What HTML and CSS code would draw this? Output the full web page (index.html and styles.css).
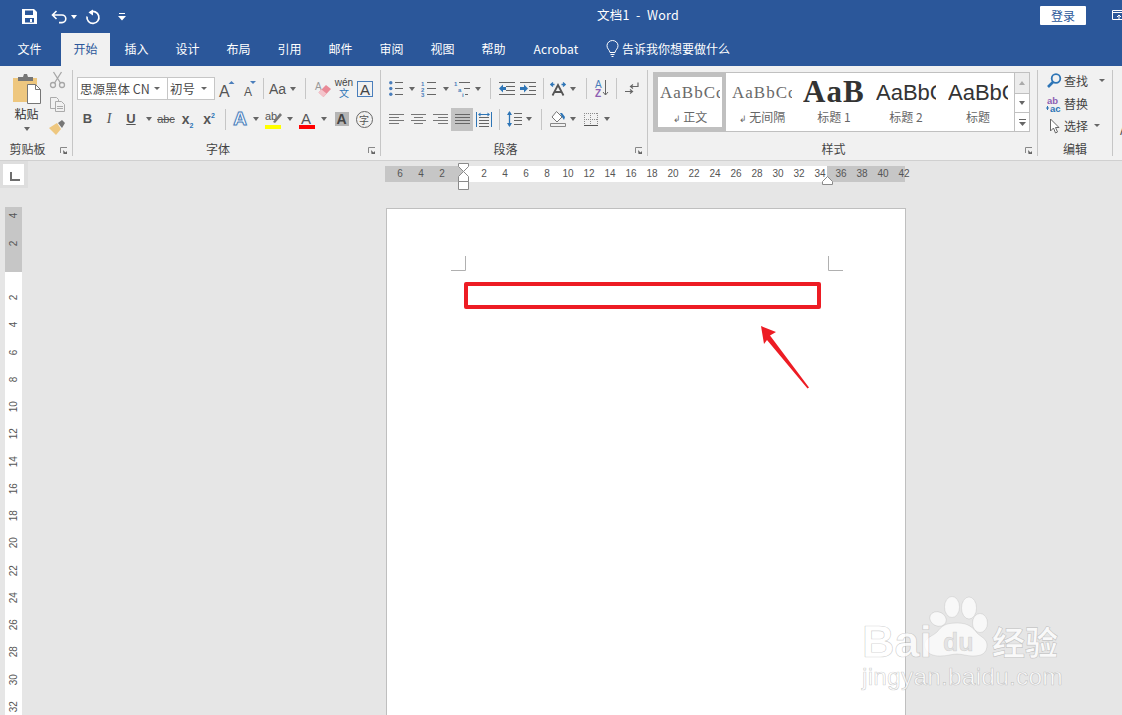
FILE: index.html
```html
<!DOCTYPE html>
<html lang="zh">
<head>
<meta charset="utf-8">
<title>文档1 - Word</title>
<link rel="stylesheet" href="styles.css">
</head>
<body>
<div class="app">
  <header class="titlebar">
    <div class="qat">
      <svg class="ic-save" width="15" height="15" viewBox="0 0 15 15"><path fill="#fff" d="M0 0h12l3 3v12H0z"/><path fill="#2b579a" d="M3 1.500h8V6H3zM3 9h9v4.500H3z"/><path fill="#fff" d="M8 10h2v3H8z"/></svg>
      <svg class="ic-undo" width="16" height="14" viewBox="0 0 16 14"><path fill="none" stroke="#fff" stroke-width="1.600" d="M5.500 1 1.500 5l4 4M2 5h9a3.800 3.800 0 0 1 0 7.600H8"/></svg>
      <span class="caret caret-w qat-caret"></span>
      <svg class="ic-redo" width="15" height="15" viewBox="0 0 15 15"><path fill="none" stroke="#fff" stroke-width="1.700" d="M5 3.200a6 6 0 1 1-3 4.300"/><path fill="#fff" d="M8 .5v6L3.500 3.500z"/></svg>
      <svg class="ic-cust" width="8" height="8" viewBox="0 0 8 8"><path fill="#fff" d="M1 0h6v1H1zM0 3h8L4 7.500z"/></svg>
    </div>
    <div class="doc-title">文档1&nbsp; -&nbsp; Word</div>
    <button class="signin">登录</button>
    <svg class="ic-display" width="12" height="10" viewBox="0 0 12 10"><path fill="none" stroke="#fff" d="M.5.500h14v9H.5zM.5 2.500h14M5 7l2-2 2 2M7 5v4"/></svg>
  </header>

  <nav class="tabs">
    <span class="tab">文件</span>
    <span class="tab tab-active">开始</span>
    <span class="tab">插入</span>
    <span class="tab">设计</span>
    <span class="tab">布局</span>
    <span class="tab">引用</span>
    <span class="tab">邮件</span>
    <span class="tab">审阅</span>
    <span class="tab">视图</span>
    <span class="tab">帮助</span>
    <span class="tab tab-latin">Acrobat</span>
    <span class="tellme">
      <svg width="13" height="17" viewBox="0 0 13 17"><path fill="none" stroke="#fff" d="M4 12.500C3.500 9.500 1 9 1 5.700a5.500 5.200 0 0 1 11 0C12 9 9.500 9.500 9 12.500zM4.500 14.500h4M5.500 16.500h2"/></svg>
      告诉我你想要做什么
    </span>
  </nav>

  <section class="ribbon">
    <div class="group g-clip">
      <div class="clip-body">
        <div class="paste">
          <svg width="30" height="30" viewBox="0 0 30 30"><path fill="#eec77f" d="M1 4h24v24H1z"/><path fill="#767676" d="M6 3h5l1-3h3l1 3h5v4H6z"/><path fill="#fff" stroke="#767676" d="M15.500 10.500h8l5 5v14h-13z"/><path fill="none" stroke="#767676" d="M23.500 10.500v5h5"/></svg>
          <span class="paste-label">粘贴</span>
          <span class="caret"></span>
        </div>
        <div class="clip-tools">
          <svg width="15" height="17" viewBox="0 0 15 17"><g fill="none" stroke="#a6a6a6" stroke-width="1.300"><circle cx="3" cy="13" r="2.500"/><circle cx="12" cy="13" r="2.500"/><path d="M4.500 11 11.500 0M10.500 11 3.500 0"/></g></svg>
          <svg width="15" height="15" viewBox="0 0 15 15"><g fill="#f1f1f1" stroke="#ababab"><path d="M.5.500h6l2 2v9h-8z"/><path d="M5.500 4.500h6l3 3v7h-9z"/></g><path stroke="#ababab" d="M7 9.500h6M7 11.500h6"/></svg>
          <svg width="16" height="15" viewBox="0 0 16 15"><path fill="#eec77f" d="M0 8 8 3l4 6-5 6z"/><path fill="#767676" d="M9 3l4-3 3 3-3 5z"/></svg>
        </div>
      </div>
      <div class="group-label label-clip">剪贴板</div>
      <svg class="launcher" width="8" height="8" viewBox="0 0 8 8"><path fill="none" stroke="#888" d="M.500 6V.500H7"/><path fill="#666" d="M3 3l4 4H3.500zM7 4v3H4z"/></svg>
    </div>

    <div class="group g-font">
      <div class="icon-row font-r1">
        <div class="combo combo-name"><span>思源黑体 CN</span><i class="caret"></i></div>
        <div class="combo combo-size"><span>初号</span><i class="caret"></i></div>
        <svg width="16" height="18" viewBox="0 0 16 18"><text class="gl" x="0" y="17" font-size="16">A</text><path fill="#4a7ebb" d="M9.500 4l3-3 3 3z"/></svg>
        <svg width="15" height="16" viewBox="0 0 15 16"><text class="gl" x="3" y="15" font-size="12">A</text><path fill="#4a7ebb" d="M9 0h6l-3 3z"/></svg>
        <span class="sep"></span>
        <svg width="20" height="16" viewBox="0 0 20 16"><text class="gl" x="1" y="13" font-size="14">Aa</text></svg>
        <span class="caret"></span>
        <span class="sep"></span>
        <svg width="16" height="18" viewBox="0 0 16 18"><text class="gl gl-light" x="0" y="10" font-size="10">A</text><path fill="#e98a97" d="M3.500 12.500 11 5l5 4-7.500 8z"/><path fill="#f4c4cb" d="M3.500 12.500 6.500 9.500l5 4-3 3.500z"/></svg>
        <div class="wen"><span class="wen-top">wén</span><span class="wen-bot">文</span></div>
        <div class="abox">A</div>
      </div>
      <div class="icon-row font-r2">
        <span class="fmt fmt-b">B</span>
        <span class="fmt fmt-i">I</span>
        <span class="fmt fmt-u">U</span>
        <span class="caret"></span>
        <span class="fmt-abc">abc</span>
        <span class="fmt fmt-sc">x<sub>2</sub></span>
        <span class="fmt fmt-sc">x<sup>2</sup></span>
        <span class="sep sep-tall"></span>
        <span class="a-glow">A</span>
        <span class="caret"></span>
        <svg width="17" height="19" viewBox="0 0 17 19"><text class="gl" x="0" y="10" font-size="11">ab</text><path fill="#777" d="M8 12l7-9 2 2-7 8z"/><path fill="#ff0" d="M0 15h16v4H0z"/></svg>
        <span class="caret"></span>
        <svg width="16" height="19" viewBox="0 0 16 19"><text class="gl" x="2" y="14" font-size="15">A</text><path fill="#f00" d="M0 15h16v4H0z"/></svg>
        <span class="caret"></span>
        <span class="a-shade">A</span>
        <span class="a-circle">字</span>
      </div>
      <div class="group-label label-font">字体</div>
      <svg class="launcher" width="8" height="8" viewBox="0 0 8 8"><path fill="none" stroke="#888" d="M.500 6V.500H7"/><path fill="#666" d="M3 3l4 4H3.500zM7 4v3H4z"/></svg>
    </div>

    <div class="group g-para">
      <div class="icon-row para-r1">
        <svg width="14" height="15" viewBox="0 0 14 15"><g fill="#4a7ebb"><circle cx="1.800" cy="1.800" r="1.700"/><circle cx="1.800" cy="7.500" r="1.700"/><circle cx="1.800" cy="13.200" r="1.700"/></g><path stroke="#666" d="M6 1.500h8M6 7.500h8M6 13.500h8"/></svg>
        <span class="caret"></span>
        <svg width="15" height="16" viewBox="0 0 15 16"><g fill="#4a7ebb" font-size="6" font-family="Liberation Sans" font-weight="700"><text x="0" y="5">1</text><text x="0" y="10.500">2</text><text x="0" y="16">3</text></g><path stroke="#666" d="M6 1.500h9M6 7.500h9M6 13.500h9"/></svg>
        <span class="caret"></span>
        <svg width="17" height="16" viewBox="0 0 17 16"><g fill="#4a7ebb" font-size="6" font-family="Liberation Sans" font-weight="700"><text x="0" y="5">1</text><text x="4" y="11">a</text><text x="8" y="16">i</text></g><path stroke="#666" d="M5 1.500h11M10 7.500h6M11 13.500h3"/></svg>
        <span class="caret"></span>
        <span class="sep"></span>
        <svg width="16" height="13" viewBox="0 0 16 13"><path stroke="#666" d="M0 .500h16M7 4.500h9M7 8.500h9M0 12.500h16"/><path fill="#2e75b6" d="M0 6.500l4-4v2.500h3v3H4v2.500z"/></svg>
        <svg width="16" height="13" viewBox="0 0 16 13"><path stroke="#666" d="M0 .500h16M9 4.500h7M9 8.500h7M0 12.500h16"/><path fill="#2e75b6" d="M8 6.500l-4-4v2.500H0v3h4v2.500z"/></svg>
        <span class="sep"></span>
        <svg width="16" height="14" viewBox="0 0 16 14"><path fill="none" stroke="#555" stroke-width="1.800" d="M2.500 13.500 8 3l5.500 10.500M4.500 10h7"/><path fill="none" stroke="#2e75b6" stroke-width="1.300" d="M3 .5 .8 2.500 3 4.500M13 .5l2.200 2-2.200 2M1 2.500h3.500M11.500 2.500H15"/></svg>
        <span class="caret"></span>
        <span class="sep"></span>
        <svg width="14" height="17" viewBox="0 0 14 17"><text x="0" y="8" font-size="10" font-family="Liberation Sans" fill="#4a7ebb">A</text><text x="0" y="16.500" font-size="10" font-family="Liberation Sans" fill="#8e5fb3" font-weight="700">Z</text><path fill="none" stroke="#666" d="M10.500 0v15M8 12l2.500 3 2.500-3"/></svg>
        <span class="sep"></span>
        <svg width="14" height="13" viewBox="0 0 14 13"><path fill="none" stroke="#666" stroke-width="1.200" d="M13 .500v4H6M8 2.500 5.500 4.500 8 6.500M0 9.500h7M5 7.500l2.500 2-2.500 2"/></svg>
      </div>
      <div class="icon-row para-r2">
        <svg width="15" height="11" viewBox="0 0 15 11"><path stroke="#777" d="M0 .500h15M0 3.500h10M0 6.500h15M0 9.500h10"/></svg>
        <svg width="15" height="11" viewBox="0 0 15 11"><path stroke="#777" d="M0 .500h15M3 3.500h9M0 6.500h15M3 9.500h9"/></svg>
        <svg width="15" height="11" viewBox="0 0 15 11"><path stroke="#777" d="M0 .500h15M5 3.500h10M0 6.500h15M5 9.500h10"/></svg>
        <span class="active-cell"><svg width="15" height="11" viewBox="0 0 15 11"><path stroke="#666" d="M0 .500h15M0 3.500h15M0 6.500h15M0 9.500h15"/></svg></span>
        <svg width="16" height="15" viewBox="0 0 16 15"><path stroke="#666" d="M3 5.500h10M3 8.500h10M3 11.500h10M3 14.500h10"/><path fill="none" stroke="#2e75b6" d="M.500 0v15M15.500 0v15M3 2.500h10"/><path fill="#2e75b6" d="M2 2.500l2.500-2v4zM14 2.500l-2.500-2v4z"/></svg>
        <span class="sep sep-tall"></span>
        <svg width="15" height="16" viewBox="0 0 15 16"><path stroke="#666" d="M7 2.500h8M7 6.500h8M7 9.500h8M7 13.500h8"/><path fill="none" stroke="#2e75b6" stroke-width="1.300" d="M2.500 1v14"/><path fill="#2e75b6" d="M0 4l2.500-4L5 4zM0 12l2.500 4L5 12z"/></svg>
        <span class="caret"></span>
        <span class="sep sep-tall"></span>
        <svg width="16" height="16" viewBox="0 0 16 16"><path fill="#fff" stroke="#777" d="M6.500.500 12 6l-5 5-5-5z"/><path fill="#2e75b6" d="M10 2h2l3 4-1 3-2-3z"/><path fill="#f1f1f1" stroke="#888" d="M.500 12.500h15v3H.500z"/></svg>
        <span class="caret"></span>
        <svg width="14" height="13" viewBox="0 0 14 13"><g fill="none" stroke="#8c8c8c" stroke-dasharray="1 1"><path d="M0 .500h14M0 6.500h14M.500 0v12M6.500 0v12M13.500 0v12"/></g><path stroke="#555" d="M0 12.500h14"/></svg>
        <span class="caret"></span>
      </div>
      <div class="group-label label-para">段落</div>
      <svg class="launcher" width="8" height="8" viewBox="0 0 8 8"><path fill="none" stroke="#888" d="M.500 6V.500H7"/><path fill="#666" d="M3 3l4 4H3.500zM7 4v3H4z"/></svg>
    </div>

    <div class="group g-styles">
      <div class="gallery">
        <div class="style-item style-sel"><span class="pv pv-serif">AaBbCc</span><span class="st"><i class="para-mark">↲</i> 正文</span></div>
        <div class="style-item"><span class="pv pv-serif">AaBbCc</span><span class="st"><i class="para-mark">↲</i> 无间隔</span></div>
        <div class="style-item"><span class="pv pv-h1">AaB</span><span class="st">标题 1</span></div>
        <div class="style-item"><span class="pv pv-h2">AaBbC</span><span class="st">标题 2</span></div>
        <div class="style-item"><span class="pv pv-h2">AaBbC</span><span class="st">标题</span></div>
        <div class="gallery-scroll">
          <span class="gs gs-up"><i class="caret caret-up"></i></span>
          <span class="gs"><i class="caret"></i></span>
          <span class="gs gs-more"><svg width="7" height="8" viewBox="0 0 7 8"><path fill="#666" d="M0 0h7v1H0zM0 3h7L3.500 7z"/></svg></span>
        </div>
      </div>
      <div class="group-label label-styles">样式</div>
      <svg class="launcher" width="8" height="8" viewBox="0 0 8 8"><path fill="none" stroke="#888" d="M.500 6V.500H7"/><path fill="#666" d="M3 3l4 4H3.500zM7 4v3H4z"/></svg>
    </div>

    <div class="group g-edit">
      <div class="edit-list">
        <div class="edit-row">
          <svg width="16" height="16" viewBox="0 0 16 16"><circle cx="10" cy="5.500" r="4.300" fill="none" stroke="#2e75b6" stroke-width="1.800"/><path stroke="#2e75b6" stroke-width="2.600" d="M7 9l-5 5"/></svg>
          <span>查找</span><i class="caret edit-caret-a"></i>
        </div>
        <div class="edit-row">
          <svg width="16" height="16" viewBox="0 0 16 16"><text x="1" y="7.500" font-size="9.500" font-family="Liberation Sans" fill="#8e5fb3" font-weight="700">ab</text><text x="4" y="15.500" font-size="9.500" font-family="Liberation Sans" fill="#2e75b6" font-weight="700">ac</text><path stroke="#2e75b6" d="M0 12h3M1.500 10v4"/></svg>
          <span>替换</span>
        </div>
        <div class="edit-row">
          <svg width="16" height="16" viewBox="0 0 16 16"><path fill="#fff" stroke="#666" d="M4.500 1v12l3-3 2 5 2-1-2-4.500h3.500z"/></svg>
          <span>选择</span><i class="caret edit-caret-b"></i>
        </div>
      </div>
      <div class="group-label">编辑</div>
    </div>
    <div class="group-cut">A</div>
  </section>

  <main class="workspace">
    <div class="corner-wrap"><div class="corner"><span class="corner-l"></span></div></div>
    <div class="hruler">
      <span>6</span><span>4</span><span>2</span><span></span><span>2</span><span>4</span><span>6</span><span>8</span><span>10</span><span>12</span><span>14</span><span>16</span><span>18</span><span>20</span><span>22</span><span>24</span><span>26</span><span>28</span><span>30</span><span>32</span><span>34</span><span>36</span><span>38</span><span>40</span><span>42</span>
      <svg class="marker-left" width="12" height="28" viewBox="0 0 12 28"><path fill="#fff" stroke="#8a8a8a" d="M.500.500h10v3l-5 5-5-5zM5.500 8.500l5 5v5H.500v-5zM.500 18.500h10v8H.500z"/></svg>
      <svg class="marker-right" width="12" height="10" viewBox="0 0 12 10"><path fill="#fff" stroke="#8a8a8a" d="M5.500.500l5 5v3H.500v-3z"/></svg>
    </div>
    <div class="vruler">
      <div class="vscale">
        <span>4</span><span>2</span><span></span><span>2</span><span>4</span><span>6</span><span>8</span><span>10</span><span>12</span><span>14</span><span>16</span><span>18</span><span>20</span><span>22</span><span>24</span><span>26</span><span>28</span><span>30</span><span>32</span>
      </div>
    </div>
    <div class="page">
      <svg class="crop crop-l" width="15" height="15" viewBox="0 0 15 15"><path fill="none" stroke="#b0b0b0" d="M14.500 0v14.500H0"/></svg>
      <svg class="crop crop-r" width="15" height="15" viewBox="0 0 15 15"><path fill="none" stroke="#b0b0b0" d="M.500 0v14.500H15"/></svg>
      <div class="callout"></div>
      <svg class="arrow" width="52" height="66" viewBox="0 0 52 66"><path fill="#ed1c24" d="M1 0 16 6 10 9.500 49 61.500 47.500 62.500 7 14 4 18z"/></svg>
    </div>
    <svg class="watermark" width="215" height="100" viewBox="0 0 215 100">
      <g class="wm-shape">
        <ellipse cx="92" cy="13" rx="7.500" ry="10.500"/>
        <ellipse cx="109" cy="14" rx="7.500" ry="11"/>
        <ellipse cx="78" cy="25" rx="8.500" ry="7" transform="rotate(25 78 25)"/>
        <ellipse cx="120" cy="29" rx="7.500" ry="9.500"/>
        <path transform="translate(3 2)" d="M77 60c-13 0-17-8-15-14 2-5 8-6 12-10 5-6 8-9 20-9s16 5 20 10c4 4 10 6 10 12 0 8-5 11-14 11-6 0-11-2-16-2s-10 2-17 2z"/>
      </g>
      <text class="wm-text wm-bai" x="2" y="63">Bai</text>
      <text class="wm-du" x="83" y="57">du</text>
      <text class="wm-text wm-cn" x="132" y="61">经验</text>
      <text class="wm-text wm-url" x="2" y="91">jingyan.baidu.com</text>
    </svg>
  </main>
</div>
</body>
</html>
```
FILE: styles.css
```css
* { box-sizing: border-box; }
html, body { margin: 0; padding: 0; }
body {
  width: 1122px;
  height: 715px;
  overflow: hidden;
  font-family: "Noto Sans CJK SC", "Liberation Sans", sans-serif;
  font-size: 12px;
  color: #444;
  background: #e6e6e6;
}
svg { overflow: visible; }
.app { display: flex; flex-direction: column; height: 715px; overflow: hidden; position: relative; }

/* title bar */
.titlebar {
  height: 33px;
  background: #2b579a;
  color: #fff;
  display: flex;
  align-items: center;
  position: relative;
  flex: none;
}
.qat { display: flex; align-items: center; padding-left: 22px; }
.ic-undo { margin-left: 14px; }
.qat-caret { margin-left: 4px; }
.ic-redo { margin-left: 8px; }
.ic-cust { margin-left: 18px; }
.doc-title { margin-left: 471px; line-height: 30px; white-space: nowrap; width: 443px; margin-top: -4px; font-size: 12.500px; letter-spacing: .3px; }
.signin {
  position: absolute;
  left: 1040px;
  top: 6px;
  width: 46px;
  height: 19px;
  background: #fff;
  border: 0;
  border-radius: 1px;
  color: #2b579a;
  font: 12px/19px "Noto Sans CJK SC", sans-serif;
  padding: 0;
}
.ic-display { position: absolute; left: 1112px; top: 10px; overflow: hidden; }

/* tabs */
.tabs {
  height: 33px;
  background: #2b579a;
  display: flex;
  align-items: stretch;
  padding-left: 5px;
  flex: none;
}
.tab { width: 49px; margin-right: 2px; text-align: center; color: #fff; line-height: 31px; white-space: nowrap; font-size: 12px; }
.tab-active { background: #f1f1f1; color: #2b579a; margin-left: 5px; margin-right: 2px; }
.tab-latin { width: 60px; margin-left: 6px; letter-spacing: .2px; margin-right: 2px; }
.tellme { display: flex; align-items: center; gap: 3px; color: #fff; margin-left: 18px; padding-bottom: 2px; white-space: nowrap; }

/* ribbon */
.ribbon {
  height: 95px;
  flex: none;
  background: #f1f1f1;
  border-bottom: 1px solid #d0d0d0;
  padding: 4px 0 4px;
  display: flex;
  overflow: hidden;
}
.group { position: relative; height: 86px; border-right: 1px solid #c6c6c6; flex: none; }
.g-clip { width: 73px; }
.g-font { width: 308px; padding: 7px 0 0 4px; }
.g-para { width: 267px; padding: 7px 0 0 4px; }
.g-styles { width: 390px; padding: 2px 0 0 5px; }
.g-edit { width: 75px; }
.group-cut { padding: 50px 0 0 7px; font-size: 13px; color: #555; }
.group-label {
  position: absolute;
  left: 0;
  right: 0;
  bottom: 0;
  line-height: 14px;
  height: 14px;
  text-align: center;
  color: #444;
}
.label-clip { padding-right: 17px; }
.label-font, .label-para { padding-right: 17px; }
.label-styles { padding-right: 18px; }
.launcher { position: absolute; right: 4px; bottom: 1px; }

.caret {
  display: inline-block;
  width: 0;
  height: 0;
  border-left: 3.500px solid transparent;
  border-right: 3.500px solid transparent;
  border-top: 4px solid #666;
}
.caret-w { border-top-color: #fff; }
.caret-up { border-top: 0; border-bottom: 4px solid #aaa; }

/* clipboard */
.clip-body { display: flex; padding: 4px 0 0 12px; }
.paste { width: 30px; display: flex; flex-direction: column; align-items: center; }
.paste-label { line-height: 16px; margin-top: 2px; margin-left: -1px; color: #333; white-space: nowrap; }
.paste .caret { margin-top: 5px; }
.clip-tools { margin-left: 7px; margin-top: -3px; display: flex; flex-direction: column; align-items: center; gap: 8px; padding-top: 1px; }

/* icon rows */
.icon-row { display: grid; align-items: center; justify-items: center; }
.font-r1 { height: 23px; grid-template-columns: 91px 47px 23px 20px 10px 20px 10px 14px 21px 22px 20px; }
.font-r2 { height: 24px; margin-top: 7px; grid-template-columns: 21px 22px 22px 13px 22px 21px 22px 10px 20px 12px 22px 12px 22px 12px 23px 22px; }
.para-r1 { height: 23px; grid-template-columns: 22px 10px 22px 14px 19px 12px 12px 21px 21px 10px 20px 10px 16px 16px 12px 20px; }
.para-r2 { height: 24px; margin-top: 7px; grid-template-columns: 22px 22px 22px 22px 22px 8px 22px 8px 16px 18px 12px 24px 8px; }
.sep { width: 1px; height: 21px; background: #c6c6c6; }
.sep-tall { height: 21px; }

.combo {
  height: 23px;
  background: #fff;
  border: 1px solid #c6c6c6;
  display: flex;
  align-items: center;
  justify-content: space-between;
  padding: 0 7px 0 2px;
  font-size: 12.500px;
  white-space: nowrap;
  justify-self: stretch;
  color: #4a4a4a;
}
.combo-size { border-left: 0; padding-left: 2px; }
.combo .caret { border-left-width: 3px; border-right-width: 3px; border-top-width: 3px; }

.gl { font-family: "Liberation Sans", sans-serif; fill: #555; }
.gl-light { fill: #999; }
.wen { display: flex; flex-direction: column; align-items: center; line-height: 10px; margin-top: -2px; }
.wen-top { font-size: 10px; color: #444; font-family: "Liberation Sans", sans-serif; }
.wen-bot { font-size: 10px; color: #2e75b6; }
.abox {
  width: 16px;
  height: 16px;
  border: 1px solid #4a7ebb;
  color: #444;
  font: 15px/15px "Liberation Sans", sans-serif;
  text-align: center;
}
.fmt { font: 13px/16px "Liberation Sans", sans-serif; color: #555; }
.fmt-b { font-weight: 700; }
.fmt-i { font-style: italic; font-family: "Liberation Serif", serif; font-size: 14px; }
.fmt-u { font-weight: 700; text-decoration: underline; }
.fmt-sc { font-weight: 700; font-size: 14px; }
.fmt-sc sub, .fmt-sc sup { font-size: 7px; color: #2e75b6; font-weight: 700; line-height: 0; }
.fmt-abc { font: 11px/14px "Liberation Sans", sans-serif; color: #555; text-decoration: line-through; }
.a-glow { font: 700 19px/20px "Liberation Sans", sans-serif; color: #fff; -webkit-text-stroke: 1px #4a7ebb; text-shadow: 0 0 2px #9dc3e6; }
.a-shade { width: 14px; height: 14px; background: #b5b5b5; color: #444; font: 700 14px/14px "Liberation Sans", sans-serif; text-align: center; }
.a-circle { width: 17px; height: 17px; border: 1px solid #666; border-radius: 50%; font-size: 10px; line-height: 15px; text-align: center; color: #555; }
.active-cell { width: 22px; height: 23px; background: #c3c3c3; display: flex; align-items: center; justify-content: center; }

/* styles gallery */
.gallery {
  width: 377px;
  height: 60px;
  background: #fff;
  border: 1px solid #c0c0c0;
  display: flex;
  overflow: hidden;
}
.style-item { width: 72px; height: 58px; flex: none; display: flex; flex-direction: column; align-items: center; overflow: hidden; color: #555; }
.style-sel { width: 72px; border: 4px solid #c0c0c0; border-bottom-width: 4px; }
.style-sel .pv { margin-top: -4px; }
.style-sel .st { margin-top: 0; }
.pv { height: 36px; line-height: 36px; width: 62px; overflow: hidden; white-space: nowrap; text-align: left; flex: none; }
.pv-serif { font: 17px/40px "Liberation Serif", serif; color: #6a6a6a; letter-spacing: 1px; width: 60px; }
.pv-h1 { font: 700 31px/38px "Liberation Serif", serif; color: #333; letter-spacing: 1px; }
.pv-h2 { font: 22px/40px "Liberation Sans", sans-serif; color: #333; width: 60px; }
.st { font-size: 12px; line-height: 16px; color: #666; white-space: nowrap; margin-top: 0; }
.para-mark { font-style: normal; font-size: 9px; }
.gallery-scroll { width: 15px; margin-left: auto; display: flex; flex-direction: column; flex: none; border-left: 1px solid #c0c0c0; }
.gs { height: 19px; flex: none; display: flex; align-items: center; justify-content: center; border-bottom: 1px solid #c0c0c0; background: #fff; }
.gs-up { height: 21px; background: #ececec; }
.gs-more { height: 19px; border-bottom: 0; }

/* edit */
.edit-list { display: flex; flex-direction: column; padding-left: 8px; margin-top: -1px; }
.edit-row { height: 23px; display: flex; align-items: center; gap: 2px; position: relative; color: #444; white-space: nowrap; }
.edit-row:last-child { margin-top: -1px; }
.edit-caret-a { margin-left: 9px; border-left-width: 3px; border-right-width: 3px; border-top-width: 3px; }
.edit-caret-b { margin-left: 4px; border-left-width: 3px; border-right-width: 3px; border-top-width: 3px; }

/* workspace */
.workspace {
  flex: 1;
  position: relative;
  display: grid;
  grid-template-columns: 386px 520px 1fr;
  grid-template-rows: 47px 1fr;
  background: #e6e6e6;
  min-height: 0;
}
.corner { width: 28px; height: 27px; background: #dedede; padding: 3px; display: flex; align-items: center; justify-content: center; }
.corner-l {
  width: 21px;
  height: 21px;
  background: #fff;
  position: relative;
  display: block;
  margin-right: 1px;
}
.corner-l::after { content: ""; position: absolute; left: 7px; top: 8px; width: 8px; height: 7px; border-left: 2px solid #6e6e6e; border-bottom: 2px solid #6e6e6e; }

.hruler {
  position: relative;
  grid-column: 2;
  width: 520px;
  height: 16px;
  margin: 5px 0 0 -1px;
  padding-left: 4.500px;
  display: flex;
  background: linear-gradient(to right, #c6c6c6 78px, #fff 78px, #fff 442px, #c6c6c6 442px);
  font: 10px/16px "Liberation Sans", sans-serif;
  color: #555;
}
.hruler span { width: 21px; flex: none; text-align: center; }
.marker-left { position: absolute; left: 73px; top: -3px; }
.marker-right { position: absolute; left: 437px; top: 10px; }

.vruler {
  grid-column: 1;
  grid-row: 2;
  width: 17px;
  margin: -1px 0 0 5px;
  overflow: hidden;
  background: linear-gradient(to bottom, #c6c6c6 65px, #fff 65px);
  font: 10px/17px "Liberation Sans", sans-serif;
  color: #555;
}
.vscale { margin-top: -4.600px; display: flex; flex-direction: column; }
.vscale span {
  height: 27.250px;
  flex: none;
  writing-mode: vertical-rl;
  transform: rotate(180deg);
  text-align: center;
  line-height: 17px;
}

.page {
  grid-column: 2;
  grid-row: 2;
  background: #fff;
  border: 1px solid #bfbfbf;
  border-bottom: 0;
  position: relative;
}
.crop { position: absolute; top: 47px; }
.crop-l { left: 64px; }
.crop-r { left: 441px; }
.callout {
  position: absolute;
  left: 77px;
  top: 73px;
  width: 357px;
  height: 27px;
  border: 4px solid #ed1c24;
  border-radius: 2px;
}
.arrow { position: absolute; left: 373px; top: 117px; }

.watermark { position: absolute; left: 860px; top: 433px; }
.wm-shape { fill: rgba(255,255,255,.72); stroke: rgba(120,120,120,.22); stroke-width: .7; }
.wm-text { font-family: "Liberation Sans", sans-serif; fill: rgba(255,255,255,.78); stroke: rgba(110,110,110,.32); stroke-width: .7; }
.wm-bai { font-size: 45px; font-weight: 700; }
.wm-du { font: 700 25px "Liberation Sans", sans-serif; fill: #e4e4e4; stroke: rgba(110,110,110,.25); stroke-width: .5; }
.wm-cn { font-family: "Noto Sans CJK SC", sans-serif; font-size: 33px; font-weight: 700; }
.wm-url { font-size: 24.500px; letter-spacing: .2px; }
```
